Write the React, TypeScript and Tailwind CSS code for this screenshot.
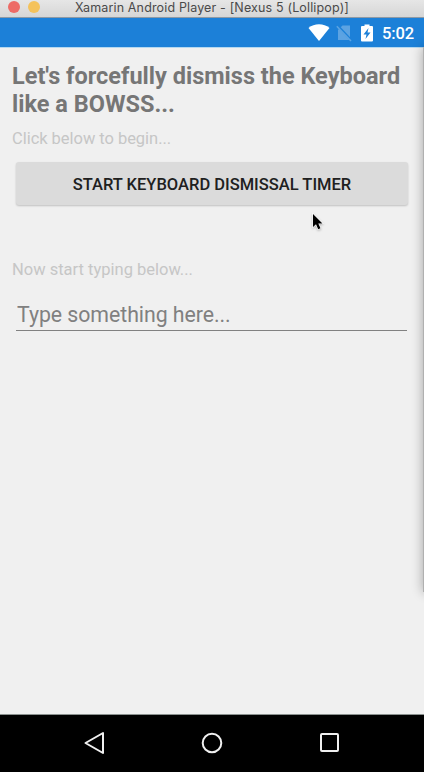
function TitleBar() {
  return (
    <header className="relative flex h-[18px] items-start overflow-hidden border-b border-[#8d99a5] bg-gradient-to-b from-[#e6e6e6] to-[#d6d6d6]">
      <div className="flex gap-2 pt-px pl-2">
        <span className="size-3 rounded-full bg-[#ed6b66]" />
        <span className="size-3 rounded-full bg-[#f4c25b]" />
      </div>
      <h1 className="ml-[35px] text-[12.500px] leading-[15px] font-normal tracking-[0.15px] whitespace-nowrap text-[#4a4a4a] [font-family:Inter,sans-serif]">
        Xamarin Android Player - [Nexus 5 (Lollipop)]
      </h1>
    </header>
  );
}

function StatusBar() {
  return (
    <div className="flex h-[30px] items-center justify-end border-b border-[#b4d8f0] bg-[#1c80d8] pr-[10px] text-white">
      <svg width="22" height="18" viewBox="0 0 22 18" fill="#fff" className="mt-px">
        <path d="M11 17 .5 4Q5 .3 11 .3T21.500 4Z" />
      </svg>
      <svg width="17" height="18" viewBox="0 0 17 18" className="ml-[6px]">
        <path d="M6.500 1.500H14V16H2V6Z" fill="#5ca3e2" />
        <path d="M1.500 1.700 15.500 16.500" stroke="#1c80d8" strokeWidth="2.500" />
        <path d="M.8 2.300 15 17" stroke="#5ca3e2" strokeWidth="1.500" />
      </svg>
      <svg width="12" height="18" viewBox="0 0 12 18" className="ml-2">
        <path d="M1 2H3.500V.5H8.500V2H11Q12 2 12 3V16.500Q12 17.500 11 17.500H1Q0 17.500 0 16.500V3Q0 2 1 2Z" fill="#fff" />
        <path d="M7.500 4 2.500 10.500H5.500L4.500 15 9.500 8.500H6.500Z" fill="#1c80d8" />
      </svg>
      <span className="mt-[3px] ml-[9px] text-[16.500px] leading-5 font-medium tracking-[-0.1px]">5:02</span>
    </div>
  );
}

function NavBar() {
  return (
    <nav className="flex h-[58px] items-center border-t border-[#8b918f] bg-black pb-[2px] pl-[83px]">
      <svg width="22" height="24" viewBox="0 0 22 24" fill="none" stroke="#f0f0f0" strokeWidth="2" strokeLinejoin="round">
        <path d="M2.500 12 20 2V22Z" />
      </svg>
      <svg width="22" height="22" viewBox="0 0 22 22" fill="none" stroke="#f0f0f0" strokeWidth="2" className="ml-24">
        <circle cx="11" cy="11" r="9.300" />
      </svg>
      <svg width="20" height="20" viewBox="0 0 20 20" fill="none" stroke="#f0f0f0" strokeWidth="2" className="ml-[97px]">
        <rect x="1" y="1" width="17" height="17" rx="1" />
      </svg>
    </nav>
  );
}

export default function App() {
  return (
    <div className="relative flex h-[772px] w-[424px] flex-col overflow-hidden bg-[#f0f0f0] [font-family:Roboto,sans-serif]">
      <TitleBar />
      <StatusBar />
      <main className="flex flex-1 flex-col pt-[14px]">
        <h2 className="pl-3 text-[23.500px] leading-7 font-bold whitespace-nowrap text-[#767676]">
          Let's forcefully dismiss the Keyboard
          <br />
          like a BOWSS...
        </h2>
        <p className="mt-[10px] pl-3 text-[16.500px] leading-[22px] tracking-[-0.04px] text-[#c6c6c6]">Click below to begin...</p>
        <button className="mt-3 mr-4 ml-4 h-[43px] rounded-[3px] bg-[#dbdbdb] pt-[3px] text-[16.500px] font-medium whitespace-nowrap text-[#202020] shadow-[0_1px_2px_rgba(0,0,0,0.2)]">
          START KEYBOARD DISMISSAL TIMER
        </button>
        <p className="mt-[54px] pl-3 text-[16.500px] leading-[22px] text-[#c6c6c6]">Now start typing below...</p>
        <input
          className="mt-[19px] mr-[17px] ml-4 h-[31px] border-b border-[#818181] pl-px text-[21.300px] tracking-[-0.05px] text-[#808080] outline-none placeholder:text-[#808080] placeholder:opacity-100"
          placeholder="Type something here..."
        />
      </main>
      <NavBar />
      <div className="pointer-events-none absolute top-[47px] left-[423px] h-[545px] w-5 bg-[#b0b0b0] shadow-[0_0_12px_rgba(0,0,0,0.32)]" />
      <svg width="14" height="20" viewBox="0 0 14 20" className="pointer-events-none absolute top-[212px] left-[311px] drop-shadow-[0_1px_1px_rgba(0,0,0,0.25)]">
        <path d="M2 2V15L5 12.300 7.200 17.300 9.500 16.300 7.300 11.500H11.500Z" fill="#000" stroke="#fff" strokeWidth="1.200" paintOrder="stroke" />
      </svg>
    </div>
  );
}
